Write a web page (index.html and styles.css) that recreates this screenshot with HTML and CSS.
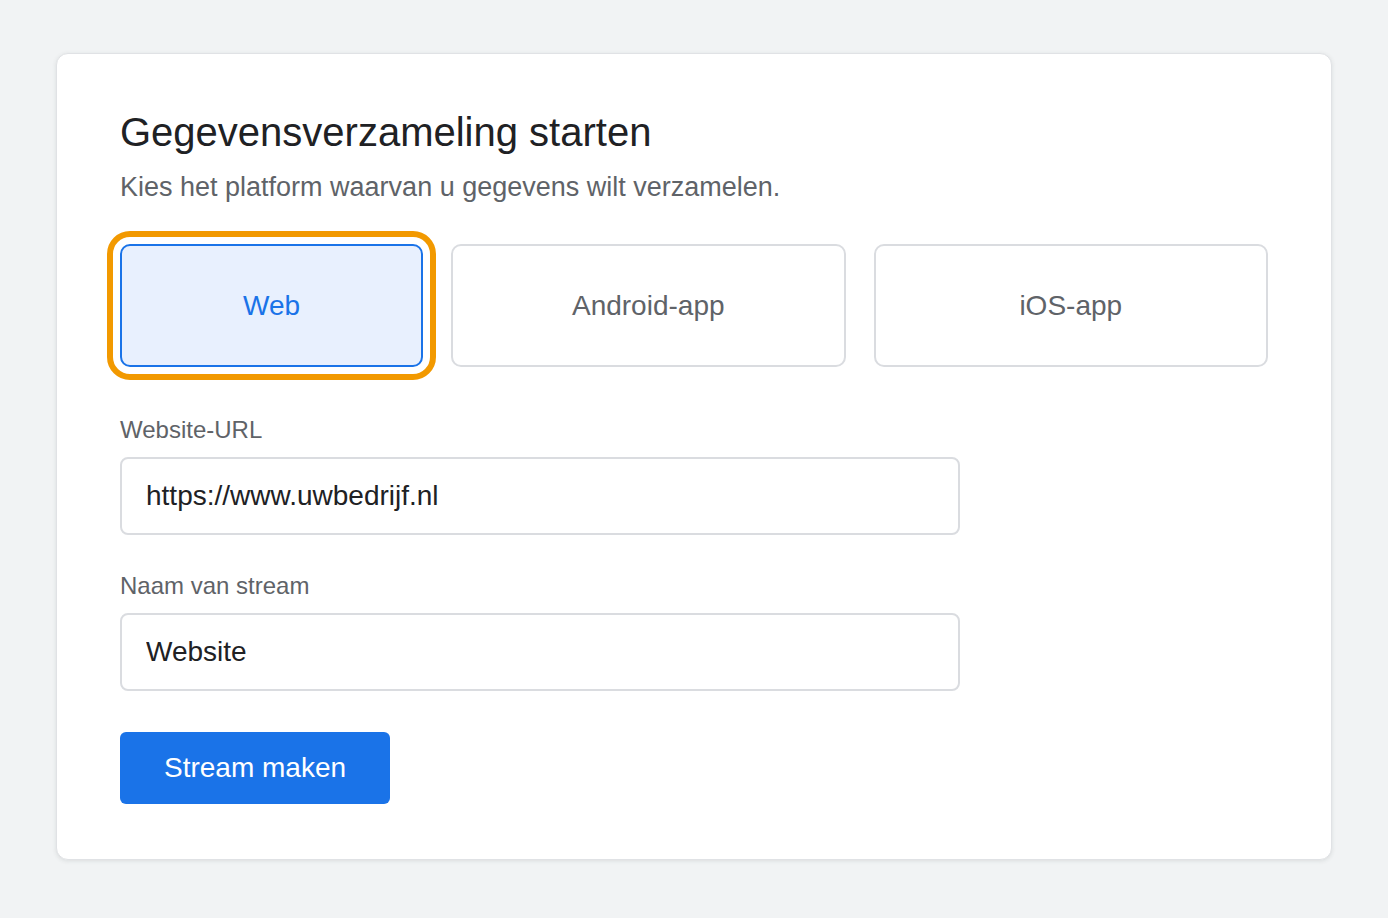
FILE: index.html
```html
<!DOCTYPE html>
<html lang="nl">
<head>
  <meta charset="UTF-8" />
  <meta name="viewport" content="width=device-width, initial-scale=1.0"/>
  <title>Gegevensverzameling starten</title>
  <link rel="stylesheet" href="styles.css">
</head>
<body>

  <div class="card">
    <h1>Gegevensverzameling starten</h1>
    <p class="subtitle">Kies het platform waarvan u gegevens wilt verzamelen.</p>

    <div class="platforms">
      <button class="platform selected">Web</button>
      <button class="platform">Android-app</button>
      <button class="platform">iOS-app</button>
    </div>

    <label class="field-label" for="url">Website-URL</label>
    <input class="field" id="url" type="text" value="https://www.uwbedrijf.nl">

    <label class="field-label second" for="name">Naam van stream</label>
    <input class="field" id="name" type="text" value="Website">

    <button class="primary">Stream maken</button>
  </div>

</body>
</html>
```

FILE: styles.css
```css
body {
  font-family: 'Liberation Sans', Arial, sans-serif;
  margin: 0;
  padding: 53px 56px;
  background: #f1f3f4;
}

.card {
  background: #ffffff;
  border: 1px solid #e0e2e5;
  border-radius: 12px;
  box-shadow: 0 1px 4px rgba(60, 64, 67, 0.12);
  padding: 55px 63px;
  display: flex;
  flex-direction: column;
  align-items: flex-start;
}

h1 {
  margin: 0;
  font-size: 40px;
  line-height: 46px;
  font-weight: normal;
  color: #202124;
}

.subtitle {
  margin: 16px 0 0;
  font-size: 27px;
  line-height: 32px;
  color: #5f6368;
}

.platforms {
  display: grid;
  grid-template-columns: 303px 1fr 1fr;
  gap: 28px;
  width: 100%;
  margin-top: 41px;
}

.platform {
  height: 123px;
  background: #ffffff;
  border: 2px solid #dadce0;
  border-radius: 10px;
  font-family: inherit;
  font-size: 28px;
  color: #5f6368;
  cursor: pointer;
}

.platform.selected {
  background: #e8f0fe;
  border-color: #1a73e8;
  color: #1a73e8;
  outline: 6px solid #f29900;
  outline-offset: 7px;
}

.field-label {
  margin-top: 49px;
  font-size: 24px;
  line-height: 28px;
  color: #5f6368;
}

.field-label.second {
  margin-top: 37px;
}

.field {
  box-sizing: border-box;
  width: 840px;
  height: 78px;
  margin-top: 13px;
  padding: 0 24px;
  border: 2px solid #dadce0;
  border-radius: 8px;
  font-family: inherit;
  font-size: 28px;
  color: #202124;
  background: #ffffff;
}

.primary {
  margin-top: 41px;
  width: 270px;
  height: 72px;
  background: #1a73e8;
  color: #ffffff;
  border: none;
  border-radius: 6px;
  font-family: inherit;
  font-size: 28px;
  cursor: pointer;
}
```
